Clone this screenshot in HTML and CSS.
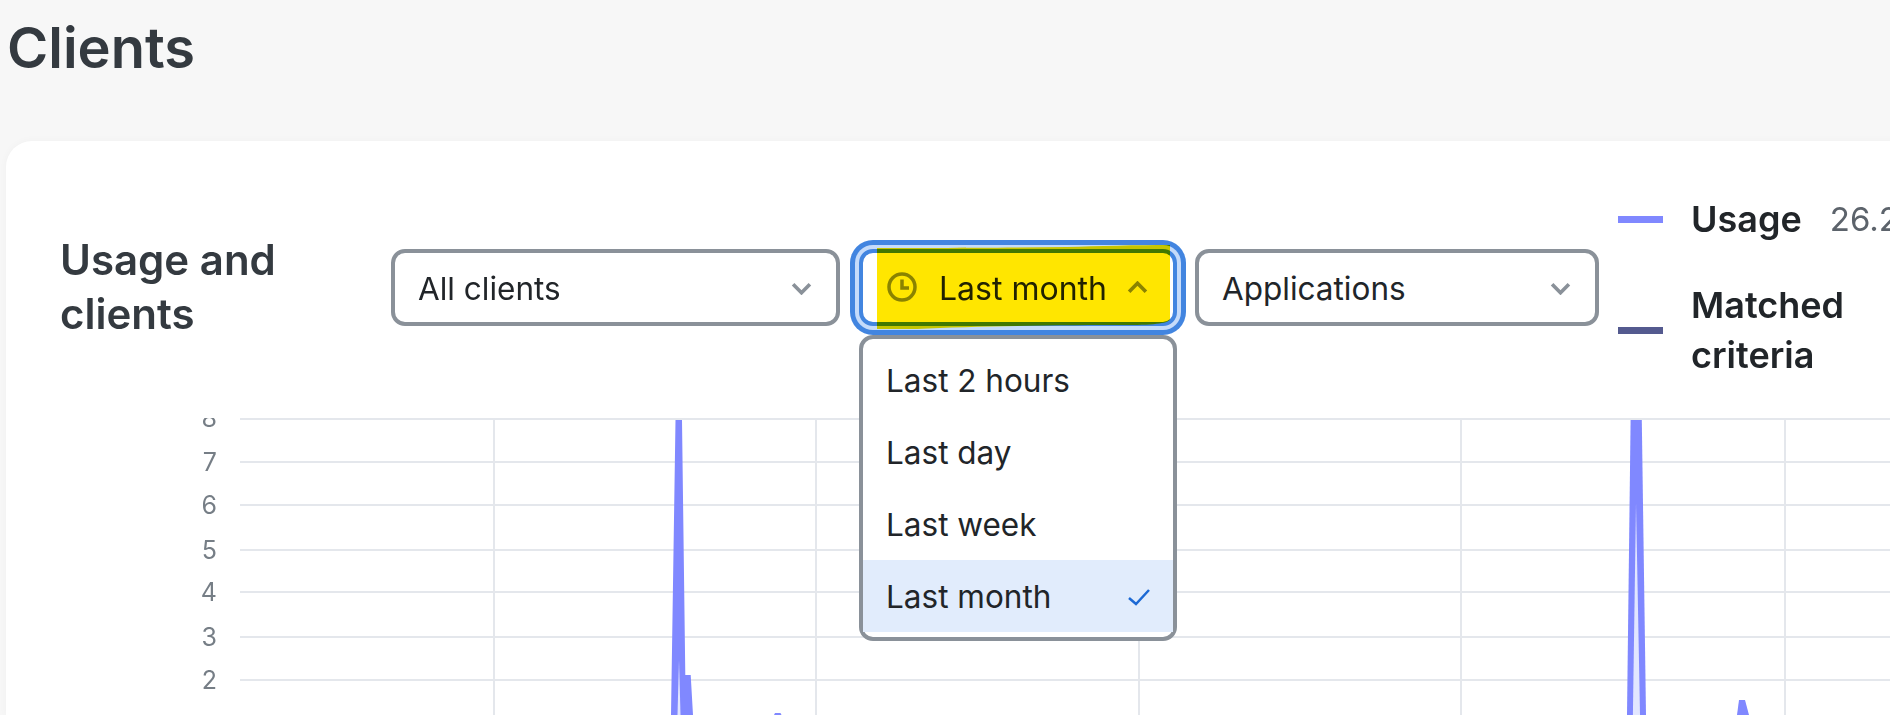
FILE: index.html
```html
<!DOCTYPE html>
<html lang="en">
<head>
<meta charset="utf-8">
<title>Clients</title>
<link rel="stylesheet" href="styles.css">
</head>
<body>
<main class="page">
  <h1 class="page-title">Clients</h1>
  <section class="card">
    <header class="card-head">
      <h2 class="card-title">Usage and clients</h2>
      <div class="select select-clients">
        <span class="select-label">All clients</span>
        <svg class="chevron" viewBox="0 0 20 12"><path d="M2 2l8 8 8-8"/></svg>
      </div>
      <div class="select select-time">
        <svg class="clock" viewBox="0 0 30 30"><circle cx="15" cy="15" r="13"/><path d="M15 7.5V16h7"/></svg>
        <span class="select-label">Last month</span>
        <svg class="chevron" viewBox="0 0 20 12"><path d="M2 10l8-8 8 8"/></svg>
        <svg class="highlight" viewBox="0 0 293 84" preserveAspectRatio="none"><path d="M0 3C40 3 120 3 190 2 220 1 260 0 293 0V74C292 78 280 80 250 80 190 80 100 81 40 84H0Z"/></svg>
        <ul class="menu">
          <li class="menu-item">Last 2 hours</li>
          <li class="menu-item">Last day</li>
          <li class="menu-item">Last week</li>
          <li class="menu-item menu-item-on">Last month
            <svg class="check" viewBox="0 0 24 18"><path d="M2 10l7 6L22 2"/></svg>
          </li>
        </ul>
      </div>
      <div class="select select-apps">
        <span class="select-label">Applications</span>
        <svg class="chevron" viewBox="0 0 20 12"><path d="M2 2l8 8 8-8"/></svg>
      </div>
      <div class="legend">
        <div class="legend-row">
          <span class="swatch swatch-usage"></span>
          <span class="legend-name">Usage</span>
          <span class="legend-value">26.2 GB</span>
        </div>
        <div class="legend-row">
          <span class="swatch swatch-matched"></span>
          <span class="legend-name">Matched criteria</span>
        </div>
      </div>
    </header>
    <svg class="chart" viewBox="6 418 1884 297">
      <g class="grid">
        <line class="grid-dash" x1="240" x2="1890" y1="417" y2="417"/>
        <line x1="240" x2="1890" y1="419" y2="419"/>
        <line x1="240" x2="1890" y1="462" y2="462"/>
        <line x1="240" x2="1890" y1="505" y2="505"/>
        <line x1="240" x2="1890" y1="550" y2="550"/>
        <line x1="240" x2="1890" y1="592" y2="592"/>
        <line x1="240" x2="1890" y1="637" y2="637"/>
        <line x1="240" x2="1890" y1="680" y2="680"/>
        <line x1="494" x2="494" y1="419" y2="715"/>
        <line x1="816" x2="816" y1="419" y2="715"/>
        <line x1="1139" x2="1139" y1="419" y2="715"/>
        <line x1="1461" x2="1461" y1="419" y2="715"/>
        <line x1="1785" x2="1785" y1="419" y2="715"/>
      </g>
      <g class="axis">
        <text x="217" y="427">8</text>
        <text x="217" y="471">7</text>
        <text x="217" y="514">6</text>
        <text x="217" y="559">5</text>
        <text x="217" y="601">4</text>
        <text x="217" y="646">3</text>
        <text x="217" y="689">2</text>
      </g>
      <g class="series">
        <path d="M675.5 420H682L685.3 675H690.7L693 715H671Z"/>
        <path d="M775 713H780.5L781.5 715H774Z"/>
        <path d="M1630.6 420H1641.8L1646 715H1627Z"/>
        <path d="M1739 700H1745L1749 715H1737Z"/>
      </g>
      <g class="series-fill">
        <path d="M679 660L680.5 715H677.5Z"/>
        <path d="M1636 503L1640 715H1632.9Z"/>
      </g>
    </svg>
  </section>
</main>
</body>
</html>
```

FILE: styles.css
```css
* { box-sizing: border-box; }
html, body { margin: 0; height: 715px; overflow: hidden; }
body {
  background: #f7f7f7;
  font-family: Inter, "Liberation Sans", sans-serif;
  color: #212529;
}
.page { width: 1890px; }
.page-title {
  margin: 0;
  padding: 12px 0 0 7px;
  height: 141px;
  font-size: 56px;
  line-height: 72px;
  font-weight: 600;
  color: #343a40;
}
.card {
  margin-left: 6px;
  width: 1900px;
  height: 574px;
  background: #fff;
  border-radius: 26px 0 0 0;
  box-shadow: 0 0 8px rgba(0, 0, 0, 0.03);
  padding-top: 53px;
  overflow: hidden;
}
.card-head {
  display: flex;
  align-items: center;
  height: 186px;
  padding-left: 54px;
}
.card-title {
  margin: 0;
  flex: none;
  width: 331px;
  font-size: 42px;
  line-height: 54px;
  font-weight: 600;
  color: #343a40;
  padding-right: 70px;
}
.select {
  position: relative;
  flex: none;
  display: flex;
  align-items: center;
  height: 77px;
  padding: 2px 24px 0 23px;
  border: 4px solid #8a9199;
  border-radius: 14px;
  background: #fff;
  font-size: 31.5px;
}
.select-clients { width: 449px; margin-right: 19px; }
.select-apps { width: 404px; margin-right: 19px; margin-left: 18px; }
.select-time {
  width: 318px;
  padding: 0 25px 0 24px;
  font-size: 32px;
  border-color: #4285e0;
  box-shadow: 0 0 0 4px #c5dbfa, 0 0 0 9px #4285e0;
}
.select-label { flex: 1; white-space: nowrap; }
.select-time .select-label { padding-top: 2px; }
.chevron {
  flex: none;
  width: 21px;
  height: 13px;
  fill: none;
  stroke: #8a9199;
  stroke-width: 3.5;
}
.clock {
  flex: none;
  width: 30px;
  height: 30px;
  margin-right: 22px;
  fill: none;
  stroke: #8a9199;
  stroke-width: 3.5;
}
.highlight {
  position: absolute;
  left: 14px;
  top: -8px;
  width: 293px;
  height: 84px;
  fill: #ffe600;
  mix-blend-mode: multiply;
  pointer-events: none;
}
.menu {
  position: absolute;
  left: -4px;
  top: 82px;
  z-index: 2;
  width: 318px;
  height: 306px;
  margin: 0;
  padding: 5px 0;
  list-style: none;
  background: #fff;
  border: 4px solid #8a9199;
  border-radius: 14px;
  font-size: 31.5px;
}
.menu-item {
  display: flex;
  justify-content: space-between;
  align-items: center;
  height: 72px;
  padding: 2px 24px 0 23px;
  white-space: nowrap;
}
.menu-item-on { background: #e1ecfc; }
.check {
  width: 24px;
  height: 18px;
  margin-right: -2px;
  fill: none;
  stroke: #1c69d4;
  stroke-width: 2.5;
}
.legend {
  flex: none;
  display: flex;
  flex-direction: column;
  gap: 36px;
  font-size: 36px;
  line-height: 50px;
}
.legend-row { display: flex; align-items: center; }
.legend-name { width: min-content; margin-left: 28px; font-weight: 600; }
.legend-value { margin-left: 28px; font-size: 33px; color: #5c636b; white-space: nowrap; }
.swatch { flex: none; width: 45px; height: 7px; }
.swatch-usage { background: #8088ff; }
.swatch-matched { background: #545a8f; }
.chart { display: block; width: 1884px; height: 297px; margin-top: 38px; }
.grid line { stroke: #e4e7ec; stroke-width: 2; }
.grid .grid-dash { stroke-dasharray: 8 5; }
.axis text { font-size: 25px; fill: #767e86; text-anchor: end; }
.series path { fill: #8088ff; }
.series-fill path { fill: #e2e6ff; }
```
